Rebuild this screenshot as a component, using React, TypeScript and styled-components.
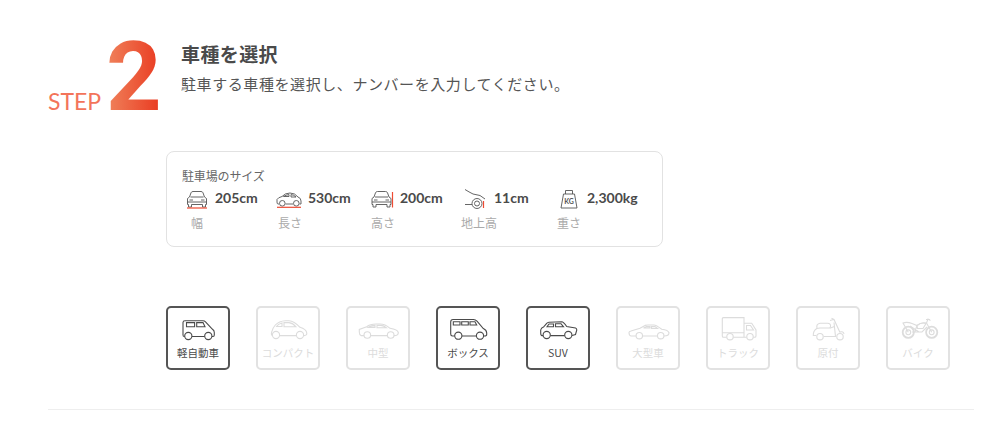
import styled, { createGlobalStyle } from "styled-components";
import type { ComponentType, ReactNode } from "react";

const jp = `"Noto Sans CJK JP", "Noto Sans", sans-serif`;

const GlobalStyle = createGlobalStyle`
  html, body {
    margin: 0;
    padding: 0;
    background: #fff;
    color: #4a4a4a;
    font-family: ${jp};
  }
  * { box-sizing: border-box; }
`;

type VehicleKind =
  | "kei"
  | "compact"
  | "mid"
  | "box"
  | "suv"
  | "large"
  | "truck"
  | "scooter"
  | "bike";

const Wheels = ({ a, b, y, r = 3.6 }: { a: number; b: number; y: number; r?: number }) => (
  <>
    <circle cx={a} cy={y} r={r} />
    <circle cx={b} cy={y} r={r} />
  </>
);

const vehicleDrawings: Record<VehicleKind, ReactNode> = {
  kei: (
    <>
      <path d="M6.7 19.5H6.2Q5 19.5 5 18V5.5Q5 3.7 7 3.7H25Q26.5 3.7 27.5 4.8L34.5 12.3Q36.3 13.5 36.3 15.5V18Q36.3 19.5 35 19.5H34M26.7 19.5H14" />
      <path d="M8.5 5.6H16.6V9.8H8.5ZM18.7 5.6H25L27 9.8H18.7Z" />
      <Wheels a={10.3} b={30.3} y={19} />
    </>
  ),
  compact: (
    <>
      <path d="M4.4 18.6Q2.8 18 3.7 15Q4.6 11 7.3 8Q11 4 17.5 3.7H21Q26 3.8 32 10.3Q38 12 38.8 16Q39 18.6 36 18.6M28.4 18.6H11.6" />
      <path d="M8.5 9.5Q10 7 14 6V9.5ZM16 5.6H21Q25 6 28 9.8H16Z" />
      <Wheels a={8} b={32} y={18} />
    </>
  ),
  mid: (
    <>
      <path d="M6 18.6H3Q1.3 18 1.3 15V12.5L8.7 9.7Q12 7 18 7H22Q27 7 32 11.3Q39.5 12.5 40.3 15.5Q40.5 18.6 36 18.6M29.4 18.6H12.6" />
      <path d="M10 10.4Q13 8.6 17 8.4V10.4ZM19 8.4H23Q26 8.6 28.5 10.8H19Z" />
      <Wheels a={9.3} b={32.7} y={18} r={3.3} />
    </>
  ),
  box: (
    <>
      <path d="M6.7 19H4.5Q2.7 19 2.7 17V5Q2.7 2.5 5 2.5H25.5Q27.5 2.6 29 4.2L35.3 11.5Q38.7 13 38.7 16V17.5Q38.7 19 36.5 19H35.6M28.4 19H14" />
      <path d="M5.3 4.7H12V8H5.3ZM13.7 4.7H20.3V8H13.7ZM22 4.7H27L28.7 8H22Z" />
      <Wheels a={10.3} b={32} y={18.7} />
    </>
  ),
  suv: (
    <>
      <path d="M5.1 18.6H4Q2.7 18.6 2.7 16V13Q3.2 10.8 5.5 10L8.7 6.3Q9.5 5.4 11 5.2L23.7 4.7Q25.5 4.7 28.7 9.5L37.5 11Q38.8 11.5 38.8 13L37.5 17.5L34 18.6M26.7 18.6H12.3" />
      <path d="M9 9.8L11 7H15.5V9.8ZM17.5 6.7H23L25.5 9.8H17.5Z" />
      <Wheels a={8.7} b={30.3} y={18} />
    </>
  ),
  large: (
    <>
      <path d="M8.3 19H3Q1 18.5 1 15.5Q1 14.5 3 14L12 11.3L17 8.4Q18.5 8 20 8H26Q28 8 33.7 12.3Q40 13 41 15.7Q41 19 36 19M29.5 19H14.5" />
      <path d="M15.5 11L18.5 9.6H22V11ZM23.5 9.6H27L29.5 11.5H23.5Z" />
      <Wheels a={11.3} b={32.7} y={18.7} r={3.2} />
    </>
  ),
  truck: (
    <>
      <path d="M8.7 20.3H5.5Q4.3 20.3 4.3 19V2Q4.3 0.6 5.5 0.6H26V20.3M4.3 15.7H26M15.3 20.3H26M26 6.3H33.7L38 13V19Q38 20.3 36.5 20.3H35.3M26 20.3H28.7" />
      <path d="M28.5 8.5H32.5L35.5 13H28.5Z" />
      <Wheels a={12} b={32} y={19.7} r={3.2} />
    </>
  ),
  scooter: (
    <>
      <path d="M23.5 1.3L26 2.5L32 15.5M22 3.5L25.5 2.5M8.3 18.5H5.3Q5 14 8.7 11.5L12 11H22.5L26.5 9.5M15.7 19.5H28" />
      <path d="M9 11Q8 7 12 6.3H19.5Q23 6.5 22.5 9.5L22 11M26 5.5Q27 15 27.5 19.5M32 15Q35.5 14 36 17" />
      <Wheels a={12} b={32} y={19.7} r={3.2} />
    </>
  ),
  bike: (
    <>
      <circle cx="10.3" cy="15.3" r="5.6" strokeWidth="1.8" />
      <circle cx="10.3" cy="15.3" r="2.4" />
      <circle cx="33.7" cy="15.3" r="5.6" strokeWidth="1.8" />
      <circle cx="33.7" cy="15.3" r="2.4" />
      <path d="M10.3 15.3L5 6Q9 4.5 14 6.5L19 8.5Q23 5 28.5 6L33.7 15.3M14 15H24L29 10M19 8.5L17 14.5M28.5 6L30 2L32.5 3.5M28 2.5H32M12 9L21 15" />
      <path d="M19 8.5Q23 5 28 6.5L25 11.5H19.5Z" />
    </>
  ),
};

const VehicleIcon = ({ kind }: { kind: VehicleKind }) => (
  <VehicleSvg viewBox="0 0 42 26">{vehicleDrawings[kind]}</VehicleSvg>
);

const CarFront = () => (
  <>
    <path d="M6.5 16.5H5.5V10.5L7.5 9L9 4.8Q9.5 3.5 11 3.5H19Q20.5 3.5 21 4.8L22.5 9L24.5 10.5V16.5H23.5V19H20.5V16.5H9.5V19H6.5Z" />
    <path d="M8.5 9H21.5M7.5 12H11M19 12H22.5M5.5 14H24.5" />
  </>
);

const WidthIcon = () => (
  <>
    <CarFront />
    <MeasureLine x1={5} y1={20} x2={25} y2={20} />
  </>
);

const LengthIcon = () => (
  <>
    <path d="M4 16H3Q2 16 2 14V11.5Q3 9.5 7 8.5Q10 5 15 5Q20 5 23 9Q26 10 26 13V16H24.5M18 16H10.5" />
    <path d="M8.5 8.5Q11 6.8 14 6.6V8.5ZM16 6.6Q19 6.8 21 9H16Z" />
    <circle cx="7.3" cy="15.3" r="2.8" />
    <circle cx="21.3" cy="15.3" r="2.8" />
    <MeasureLine x1={2} y1={19.3} x2={26} y2={19.3} />
  </>
);

const HeightIcon = () => (
  <>
    <g transform="translate(-0.5 0)">
      <CarFront />
    </g>
    <MeasureLine x1={25.5} y1={4} x2={25.5} y2={19.5} />
  </>
);

const ClearanceIcon = () => (
  <>
    <path d="M4 1.5Q8 4 12 6Q20 6.5 24 11M4 16.5H11" />
    <circle cx="16" cy="15.5" r="5" />
    <circle cx="16" cy="15.5" r="2.5" />
    <MeasureLine x1={22.5} y1={13} x2={22.5} y2={20} />
  </>
);

const WeightIcon = () => (
  <>
    <path d="M11.5 6V2.5H18.5V6M9.5 6H20.5L23 20H7Z" />
    <KgMark x="15" y="16">KG</KgMark>
  </>
);

const specs: { value: string; label: string; Icon: ComponentType; labelNudge?: number }[] = [
  { value: "205cm", label: "幅", Icon: WidthIcon },
  { value: "530cm", label: "長さ", Icon: LengthIcon },
  { value: "200cm", label: "高さ", Icon: HeightIcon, labelNudge: 2 },
  { value: "11cm", label: "地上高", Icon: ClearanceIcon, labelNudge: 6 },
  { value: "2,300kg", label: "重さ", Icon: WeightIcon },
];

const vehicles: { kind: VehicleKind; label: string; active?: boolean }[] = [
  { kind: "kei", label: "軽自動車", active: true },
  { kind: "compact", label: "コンパクト" },
  { kind: "mid", label: "中型" },
  { kind: "box", label: "ボックス", active: true },
  { kind: "suv", label: "SUV", active: true },
  { kind: "large", label: "大型車" },
  { kind: "truck", label: "トラック" },
  { kind: "scooter", label: "原付" },
  { kind: "bike", label: "バイク" },
];

export default function App() {
  return (
    <>
      <GlobalStyle />
      <Page>
        <Header>
          <Step>
            <StepWord>STEP</StepWord>
            <StepNumber>2</StepNumber>
          </Step>
          <HeaderText>
            <Title>車種を選択</Title>
            <Description>駐車する車種を選択し、ナンバーを入力してください。</Description>
          </HeaderText>
        </Header>

        <Body>
          <SizeCard>
            <CardTitle>駐車場のサイズ</CardTitle>
            <SpecRow>
              {specs.map(({ value, label, Icon, labelNudge }) => (
                <Spec key={label}>
                  <SpecSvg viewBox="0 0 30 22">
                    <Icon />
                  </SpecSvg>
                  <SpecValue>{value}</SpecValue>
                  <SpecLabel $nudge={labelNudge}>{label}</SpecLabel>
                </Spec>
              ))}
            </SpecRow>
          </SizeCard>

          <VehicleRow>
            {vehicles.map((v) => (
              <VehicleButton key={v.kind} $active={v.active}>
                <VehicleIcon kind={v.kind} />
                <VehicleLabel>{v.label}</VehicleLabel>
              </VehicleButton>
            ))}
          </VehicleRow>
        </Body>

        <Divider />
      </Page>
    </>
  );
}

const Page = styled.div`
  width: 1000px;
  height: 447px;
  padding: 0 26px 0 48px;
  overflow: hidden;
`;

const Header = styled.div`
  display: flex;
  align-items: flex-start;
  height: 151px;
`;

const Step = styled.div`
  display: flex;
  align-items: flex-end;
  height: 115px;
  width: 133px;
`;

const StepWord = styled.span`
  font-family: "Lato", sans-serif;
  font-weight: 400;
  font-size: 23px;
  line-height: 28px;
  width: 58px;
  color: #f3745a;
`;

const StepNumber = styled.span`
  font-family: "Roboto", sans-serif;
  font-weight: 700;
  font-size: 97px;
  line-height: 97px;
  margin-bottom: -11px;
  background: linear-gradient(90deg, #f0835c 0%, #e9381f 100%);
  -webkit-background-clip: text;
  background-clip: text;
  color: transparent;
`;

const HeaderText = styled.div`
  padding-top: 41px;
`;

const Title = styled.h2`
  margin: 0;
  font-family: ${jp};
  font-size: 19px;
  line-height: 26px;
  font-weight: 700;
  letter-spacing: 0.4px;
  color: #4a4a4a;
`;

const Description = styled.p`
  margin: 6px 0 0;
  font-family: ${jp};
  font-size: 15px;
  line-height: 22px;
  letter-spacing: 0.58px;
  color: #555;
`;

const Body = styled.div`
  margin-left: 118px;
`;

const SizeCard = styled.div`
  width: 497px;
  height: 96px;
  padding: 15px 15px 0;
  border: 1px solid #e2e2e2;
  border-radius: 8px;
`;

const CardTitle = styled.div`
  font-size: 12px;
  line-height: 18px;
  letter-spacing: -0.15px;
  color: #666;
`;

const SpecRow = styled.div`
  display: grid;
  grid-template-columns: 93px 92px 94px 93px auto;
  margin-top: 3px;
`;

const Spec = styled.div`
  display: grid;
  grid-template-columns: 30px auto;
  grid-template-rows: 22px auto;
  column-gap: 3px;
  align-items: center;
  justify-content: start;
`;

const SpecSvg = styled.svg`
  width: 30px;
  height: 22px;
  fill: none;
  stroke: #555;
  stroke-width: 0.9;
`;

const MeasureLine = styled.line`
  stroke: #ee4b33;
  stroke-width: 1.2;
`;

const KgMark = styled.text`
  font-family: "Lato", sans-serif;
  font-size: 7px;
  font-weight: 700;
  fill: #555;
  stroke: none;
  text-anchor: middle;
`;

const SpecValue = styled.span`
  font-family: "Lato", sans-serif;
  font-size: 14px;
  font-weight: 700;
  line-height: 20px;
  margin-top: -3px;
  color: #4a4a4a;
`;

const SpecLabel = styled.span<{ $nudge?: number }>`
  grid-column: 1;
  margin: 4px -8px 0;
  padding-left: ${(p) => p.$nudge ?? 0}px;
  text-align: center;
  white-space: nowrap;
  font-size: 12px;
  line-height: 18px;
  color: #aaa;
`;

const VehicleRow = styled.div`
  display: flex;
  gap: 26px;
  margin-top: 59px;
`;

const VehicleButton = styled.div<{ $active?: boolean }>`
  width: 64px;
  height: 64px;
  padding-top: 9px;
  display: flex;
  flex-direction: column;
  align-items: center;
  border: 2px solid ${(p) => (p.$active ? "#555" : "#e2e2e2")};
  border-radius: 5px;
  color: ${(p) => (p.$active ? "#4a4a4a" : "#dcdcdc")};
`;

const VehicleSvg = styled.svg`
  width: 42px;
  height: 26px;
  margin-left: 2px;
  flex: none;
  fill: none;
  stroke: currentColor;
  stroke-width: 1.1;
`;

const VehicleLabel = styled.span`
  margin-top: 2px;
  font-size: 10.5px;
  line-height: 16px;
  white-space: nowrap;
`;

const Divider = styled.hr`
  margin: 39px 0 0;
  border: 0;
  border-top: 1px solid #eee;
`;
